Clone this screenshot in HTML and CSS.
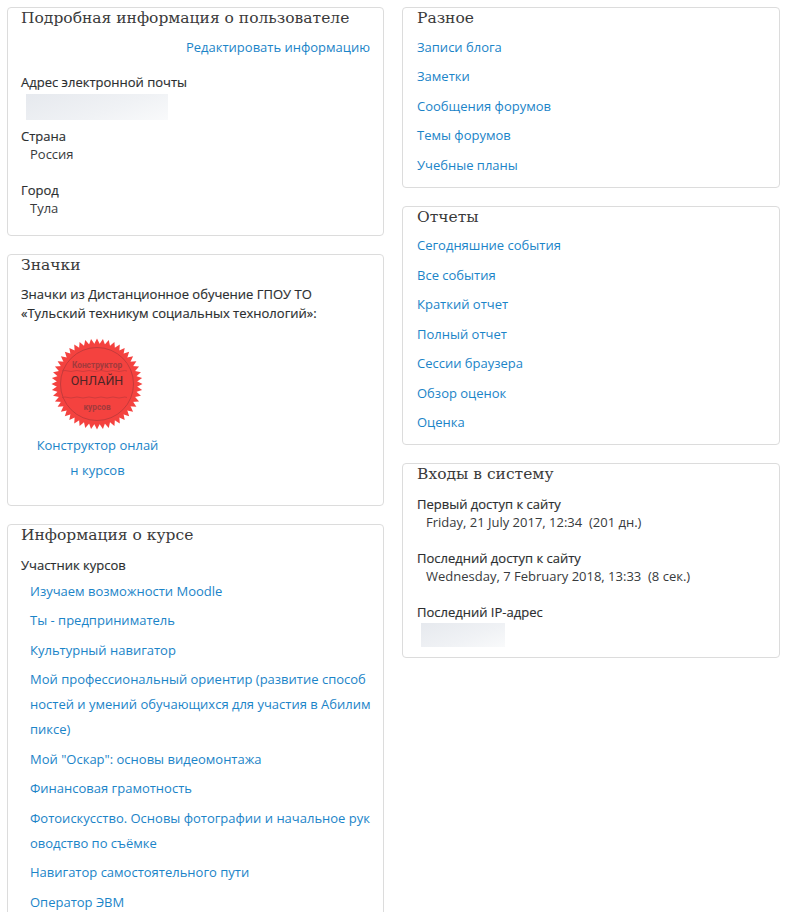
FILE: index.html
```html
<!DOCTYPE html>
<html lang="en">
<head>
    <meta charset="UTF-8">
    <meta name="viewport" content="width=device-width, initial-scale=1.0">
    <title>Профиль пользователя</title>
    <link rel="stylesheet" href="styles.css">
</head>
<body>
    <div class="page">
        <div class="column">
            <section class="card card-details">
                <h3>Подробная информация о пользователе</h3>
                <div class="edit-row"><a href="#">Редактировать информацию</a></div>
                <dl>
                    <dt>Адрес электронной почты</dt>
                    <dd><div class="blur blur-email"></div></dd>
                    <dt>Страна</dt>
                    <dd>Россия</dd>
                    <dt>Город</dt>
                    <dd>Тула</dd>
                </dl>
            </section>

            <section class="card card-badges">
                <h3>Значки</h3>
                <p class="badges-title">Значки из Дистанционное обучение ГПОУ ТО<br>«Тульский техникум социальных технологий»:</p>
                <div class="badge">
                    <svg class="badge-img" width="92" height="92" viewBox="-46 -46 92 92">
                        <defs>
                            <polygon id="t1" points="-3.3,-39 0,-45.5 3.3,-39" fill="#f4423f"/>
                            <g id="t2"><use href="#t1"/><use href="#t1" transform="rotate(7.5)"/></g>
                            <g id="t4"><use href="#t2"/><use href="#t2" transform="rotate(15)"/></g>
                            <g id="t8"><use href="#t4"/><use href="#t4" transform="rotate(30)"/></g>
                            <g id="t16"><use href="#t8"/><use href="#t8" transform="rotate(60)"/></g>
                        </defs>
                        <use href="#t16"/>
                        <use href="#t16" transform="rotate(120)"/>
                        <use href="#t16" transform="rotate(240)"/>
                        <circle r="40" fill="#f4423f"/>
                        <circle r="36.5" fill="none" stroke="#b9383a" stroke-width="0.8"/>
                        <path class="wave" d="M-35,-13 q3,-1 6,0 t6,0 t6,0 t6,0 t6,0 t6,0 t6,0 t6,0 t6,0 t6,0 t5,0"/>
                        <path class="wave" d="M-35,13.5 q3,-1 6,0 t6,0 t6,0 t6,0 t6,0 t6,0 t6,0 t6,0 t6,0 t6,0 t5,0"/>
                        <text class="badge-small" y="-16.5" text-anchor="middle">Конструктор</text>
                        <text class="badge-big" y="0.5" text-anchor="middle">ОНЛАЙН</text>
                        <text class="badge-small" y="25.5" text-anchor="middle">курсов</text>
                    </svg>
                    <a href="#" class="badge-name">Конструктор онлайн курсов</a>
                </div>
            </section>

            <section class="card card-courses">
                <h3>Информация о курсе</h3>
                <div class="label">Участник курсов</div>
                <ul class="links links-courses">
                    <li><a href="#">Изучаем возможности Moodle</a></li>
                    <li><a href="#">Ты - предприниматель</a></li>
                    <li><a href="#">Культурный навигатор</a></li>
                    <li><a href="#">Мой профессиональный ориентир (развитие способностей и умений обучающихся для участия в Абилимпиксе)</a></li>
                    <li><a href="#">Мой "Оскар": основы видеомонтажа</a></li>
                    <li><a href="#">Финансовая грамотность</a></li>
                    <li><a href="#">Фотоискусство. Основы фотографии и начальное руководство по съёмке</a></li>
                    <li><a href="#">Навигатор самостоятельного пути</a></li>
                    <li><a href="#">Оператор ЭВМ</a></li>
                </ul>
            </section>
        </div>

        <div class="column column-right">
            <section class="card card-misc">
                <h3>Разное</h3>
                <ul class="links">
                    <li><a href="#">Записи блога</a></li>
                    <li><a href="#">Заметки</a></li>
                    <li><a href="#">Сообщения форумов</a></li>
                    <li><a href="#">Темы форумов</a></li>
                    <li><a href="#">Учебные планы</a></li>
                </ul>
            </section>

            <section class="card card-reports">
                <h3>Отчеты</h3>
                <ul class="links">
                    <li><a href="#">Сегодняшние события</a></li>
                    <li><a href="#">Все события</a></li>
                    <li><a href="#">Краткий отчет</a></li>
                    <li><a href="#">Полный отчет</a></li>
                    <li><a href="#">Сессии браузера</a></li>
                    <li><a href="#">Обзор оценок</a></li>
                    <li><a href="#">Оценка</a></li>
                </ul>
            </section>

            <section class="card card-logins">
                <h3>Входы в систему</h3>
                <dl>
                    <dt>Первый доступ к сайту</dt>
                    <dd>Friday, 21 July 2017, 12:34 &nbsp;(201 дн.)</dd>
                    <dt>Последний доступ к сайту</dt>
                    <dd>Wednesday, 7 February 2018, 13:33 &nbsp;(8 сек.)</dd>
                    <dt>Последний IP-адрес</dt>
                    <dd><div class="blur blur-ip"></div></dd>
                </dl>
            </section>
        </div>
    </div>
</body>
</html>
```

FILE: styles.css
```css
html, body {
    margin: 0;
    padding: 0;
    background: #fff;
}

body {
    font-family: "Open Sans", "Liberation Sans", sans-serif;
    font-size: 13px;
    color: #373a3c;
}

a {
    color: #1b84c8;
    text-decoration: none;
}

.page {
    display: grid;
    grid-template-columns: 377px 378px;
    gap: 18px;
    padding: 7px 0 0 7px;
    height: 905px;
    overflow: hidden;
    align-items: start;
}

.column {
    display: flex;
    flex-direction: column;
    gap: 18px;
}

.card {
    box-sizing: border-box;
    border: 1px solid #dcdcdc;
    border-radius: 4px;
    padding: 0 13px;
    background: #fff;
}

.column-right .card {
    padding: 0 14px;
}

h3 {
    font-family: "DejaVu Serif", "Liberation Serif", serif;
    font-weight: 400;
    font-size: 15.5px;
    line-height: 20px;
    margin: 0;
    color: #3a3a3a;
}

dl {
    margin: 0;
}

dt {
    color: #2b2e30;
    -webkit-text-stroke: 0.15px #2b2e30;
    line-height: 18px;
}

dd {
    margin: 0 0 18px 9px;
    line-height: 18px;
}

.card-details {
    height: 229px;
}

.edit-row {
    text-align: right;
    line-height: 18px;
    margin-top: 10px;
    margin-bottom: 17px;
}

.blur {
    background: linear-gradient(160deg, #e6e9ee, #f0f2f5 60%, #f9fafb);
}

.blur-email {
    width: 142px;
    height: 26px;
    margin: 3px 0 -11px -4px;
}

.blur-ip {
    width: 84px;
    height: 24px;
    margin: 2px 0 0 -5px;
}

.card-badges {
    height: 252px;
}

.badges-title {
    margin: 10px 0 0;
    line-height: 18.5px;
    color: #2b2e30;
    -webkit-text-stroke: 0.15px #2b2e30;
}

.badge {
    display: flex;
    flex-direction: column;
    align-items: center;
    width: 125px;
    margin: 16px 0 0 14px;
}

.badge-img {
    display: block;
    margin-right: 2px;
}

.badge-name {
    display: block;
    margin-top: 3px;
    line-height: 25px;
    text-align: center;
    word-break: break-all;
}

.wave {
    fill: none;
    stroke: #c23a3b;
    stroke-width: 0.7;
}

.badge-small {
    font-family: "Roboto", sans-serif;
    font-size: 8.3px;
    font-weight: 700;
    fill: #a23a3c;
}

.badge-big {
    font-family: "Roboto", sans-serif;
    font-size: 12.5px;
    font-weight: 400;
    fill: #4e2526;
}

.card-courses {
    padding-bottom: 20px;
}

.label {
    margin-top: 11px;
    line-height: 18px;
    color: #2b2e30;
    -webkit-text-stroke: 0.15px #2b2e30;
}

.links {
    list-style: none;
    margin: 6.5px 0 0;
    padding: 0;
}

.links li {
    line-height: 25px;
    margin-bottom: 4.5px;
}

.links-courses {
    margin: 4.5px -2px 0 9px;
}

.links-courses li {
    word-break: break-all;
}

.card-misc {
    height: 181px;
}

.card-reports {
    height: 239px;
}

.card-reports .links {
    margin-top: 6px;
}

.card-logins {
    height: 195px;
}

.card-logins dl {
    margin-top: 11px;
}
```
